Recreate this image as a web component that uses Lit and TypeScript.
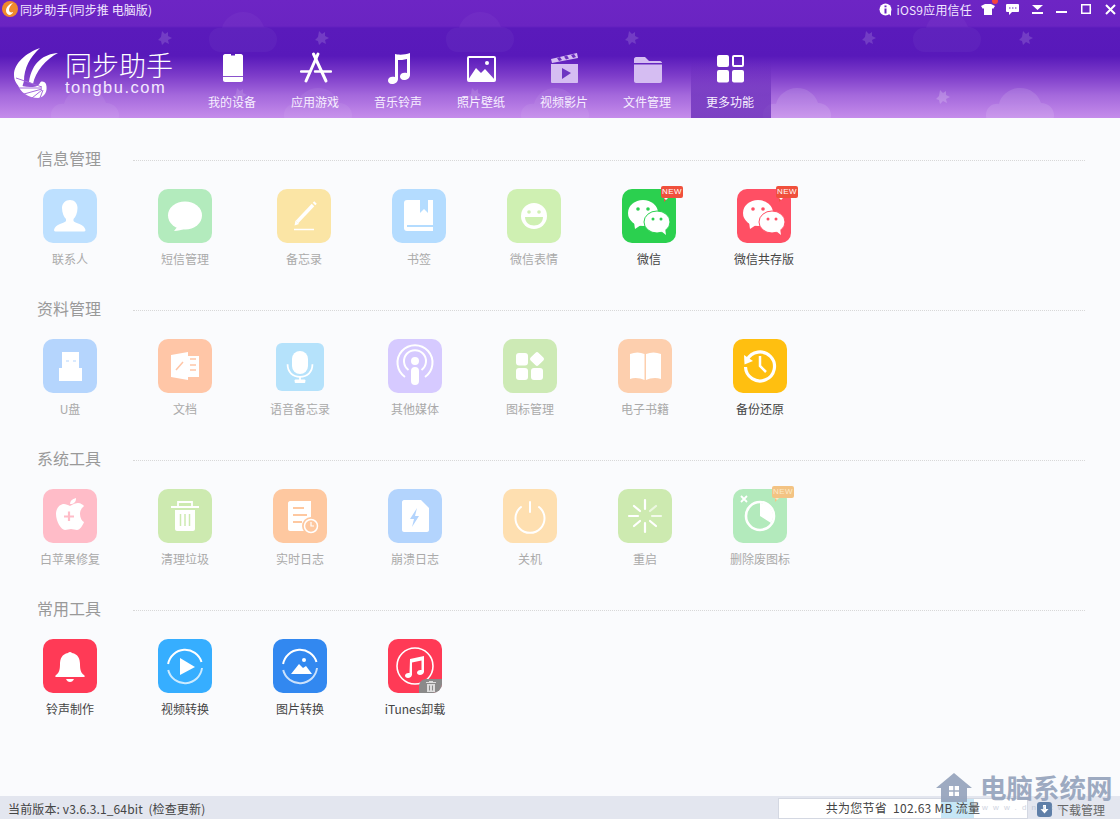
import { LitElement, html, css, svg, nothing } from "lit";
import { customElement } from "lit/decorators.js";

const W = "#fff";
const T = "var(--t)";

// tile glyphs, all on a 54x54 box
const glyphs: Record<string, unknown> = {
  contact: svg`<path fill="${W}" d="M27 11c4.500 0 7.500 3.500 7.500 8 0 5-2 9-4 11v2c1 2 11 3 12 9 0 1-1 1.500-2 1.500H13c-1 0-2-.5-2-1.500 1-6 11-7 12-9v-2c-2-2-4-6-4-11 0-4.500 3.500-8 8-8z"/>`,
  sms: svg`<ellipse fill="${W}" cx="27" cy="26.500" rx="17" ry="14"/><path fill="${W}" d="M20 37l-4 5c4 0 8-1 11-2.500z"/>`,
  note: svg`<path stroke="${W}" stroke-width="3.500" d="M20 33L36 16"/><path stroke="${W}" stroke-width="3.500" d="M37 15l1.500-1.500"/><path fill="${W}" d="M17.500 36.500l1-5 3.500 3.500z"/><path stroke="${W}" stroke-width="1.600" d="M17 40.500h20"/>`,
  book: svg`<path fill="${W}" d="M15 11h26v31H15c-2 0-3-1-3-3V14c0-2 1-3 3-3z"/><path fill="${T}" d="M28 11h8v13l-4-4-4 4z"/><path stroke="${T}" stroke-width="2" d="M15 37h26"/>`,
  smile: svg`<circle fill="${W}" cx="27" cy="27" r="13"/><circle fill="${T}" cx="22" cy="23" r="1.800"/><circle fill="${T}" cx="32" cy="23" r="1.800"/><path fill="${T}" d="M18 28h18c0 5-4 8.500-9 8.500S18 33 18 28z"/>`,
  wechat: svg`<ellipse fill="${W}" cx="21" cy="24" rx="15" ry="13"/><path fill="${W}" d="M12 33l1 7 6-4z"/><circle fill="${T}" cx="16" cy="20" r="1.800"/><circle fill="${T}" cx="26" cy="20" r="1.800"/><ellipse fill="${W}" stroke="${T}" stroke-width="1" cx="35" cy="33" rx="13" ry="11"/><path fill="${W}" d="M39 42l5 4-1-7z"/><circle fill="${T}" cx="31" cy="30" r="1.500"/><circle fill="${T}" cx="39" cy="30" r="1.500"/>`,
  usb: svg`<path fill="${W}" d="M19 13h17v16H19z"/><path fill="${W}" d="M16 29h23v13H16z"/><path stroke="${T}" stroke-width="1.200" d="M23 22h3M30 22h3"/>`,
  doc: svg`<path fill="${W}" d="M13 16l17-3v28l-17-3z"/><path fill="${W}" d="M30 17h11v21H30z"/><path stroke="${T}" stroke-width="1.500" d="M18 31l7-8M32 20h6M32 26h6M32 31h6"/>`,
  mic: svg`<rect fill="${W}" x="18" y="9" width="18" height="26" rx="9"/><path fill="none" stroke="${W}" stroke-width="2" d="M13 24c0 9 6 14 14 14s14-5 14-14"/><path stroke="${W}" stroke-width="2" d="M27 38v5"/><rect fill="${W}" x="21" y="41" width="12" height="4" rx="1"/>`,
  podcast: svg`<g fill="none" stroke="${W}" stroke-width="2"><path d="M17 38a17.500 17.500 0 1 1 20 0"/><path d="M20.500 31a11 11 0 1 1 13 0"/></g><circle fill="${W}" cx="27" cy="22" r="4"/><rect fill="${W}" x="23" y="28" width="8" height="18" rx="4"/>`,
  apps: svg`<g fill="${W}"><rect x="13" y="14" width="12" height="12.500" rx="3"/><rect x="28.500" y="14.500" width="11" height="11" rx="2" transform="rotate(45 34 20)"/><rect x="13" y="29" width="12" height="12" rx="3"/><rect x="28" y="29" width="12" height="12" rx="3"/></g>`,
  ebook: svg`<path fill="${W}" d="M12 15c5-2 10-2 14.500 0v26c-4-2-10-3-14.500-1z"/><path fill="${W}" d="M43 15c-5-2-10-2-15 0v26c4-2 10-3 15-1z"/>`,
  backup: svg`<path fill="none" stroke="${W}" stroke-width="3.200" d="M14 21a14.500 14.500 0 1 1-1.500 7"/><path fill="${W}" d="M11 16l9 6-8.500 3.500z"/><path fill="none" stroke="${W}" stroke-width="2.500" d="M27 17v10l6 6"/>`,
  apple: svg`<path fill="${W}" d="M27 17c3-2 6-3 8-3 3 0 5 2 6 3-2 2-4 4-4 8 0 4 2 7 4 8-1 3-4 8-7 8-2 0-4-1-6-1s-4 1-6 1c-4 0-9-9-9-16 0-6 4-10 8-10 2 0 4 1 6 2z"/><path fill="${W}" d="M27 15c0-3 2-5 6-6 0 4-2 6-6 6z"/><path stroke="${T}" stroke-width="2.200" d="M26 22.500v9.500M21 27.500h10"/>`,
  trash: svg`<path fill="none" stroke="${W}" stroke-width="1.800" d="M20 18v-5h14v5"/><path stroke="${W}" stroke-width="2" d="M13 18h28"/><path fill="${W}" d="M17 21h20v19c0 1-1 2-2 2H19c-1 0-2-1-2-2z"/><path stroke="${T}" stroke-width="1.500" d="M22.500 25v12M27 25v12M31.500 25v12"/>`,
  log: svg`<path fill="${W}" d="M17 12h21v30H17c-1 0-2-1-2-2V14c0-1 1-2 2-2z"/><path stroke="${T}" stroke-width="1.800" d="M20 19h11M20 26h14M20 33h9"/><circle fill="${T}" cx="38" cy="37" r="9"/><circle fill="none" stroke="${W}" stroke-width="1.500" cx="38" cy="37" r="6.500"/><path fill="none" stroke="${W}" stroke-width="1.200" d="M38 33v4h3"/>`,
  crash: svg`<path fill="${W}" d="M16 11h17l8 8v22c0 1-1 2-2 2H16c-1 0-2-1-2-2V13c0-1 1-2 2-2z"/><path fill="${T}" d="M29 19l-7 11h4l-2 8 7-11h-4z"/>`,
  power: svg`<g fill="none" stroke="${W}" stroke-width="2" stroke-linecap="round"><path d="M18 18a14.500 14.500 0 1 0 18 0"/><path d="M27 13v10"/></g>`,
  restart: svg`<g fill="none" stroke="${W}" stroke-width="2.200" stroke-linecap="round"><path d="M27 11v9"/><path d="M27 34v9"/><path d="M11 27h9"/><path opacity=".75" d="M34 27h9"/><path d="M16 17l6 5"/><path opacity=".6" d="M38 17l-6 5"/><path d="M16 37l6-5"/><path d="M38 37l-6-5"/></g>`,
  clean: svg`<path stroke="${W}" stroke-width="1.800" d="M8 7l6 6M14 7l-6 6"/><circle fill="none" stroke="${W}" stroke-width="2.600" cx="27" cy="27" r="14"/><path fill="${W}" d="M27 14a13 13 0 0 1 11 20l-11-7z"/>`,
  bell: svg`<path fill="${W}" d="M27 13a2.500 2.500 0 0 1 2 1c6 1 8 6 8 11 0 6 1 9 4 11 1 1 1 2 0 2H13c-1 0-1-1 0-2 3-2 4-5 4-11 0-5 2-10 8-11a2.500 2.500 0 0 1 2-1z"/><path fill="${W}" d="M23 40h8c-1 2-2 3-4 3s-3-1-4-3z"/>`,
  video: svg`<g fill="none" stroke="${W}" stroke-width="2"><path d="M10.100 25A17.200 17.200 0 0 1 43.500 23"/><path opacity=".75" d="M44 29A17.200 17.200 0 0 1 10.200 31"/></g><path fill="${W}" d="M22 19l15 9-15 8z"/>`,
  photo: svg`<g fill="none" stroke="${W}" stroke-width="2"><path d="M10.100 25A17.200 17.200 0 0 1 43.500 23"/><path opacity=".75" d="M44 29A17.200 17.200 0 0 1 10.200 31"/></g><path fill="${W}" d="M18 35l8-10 4 4 3-2 6 8z"/><circle fill="${W}" cx="31" cy="21" r="2"/>`,
  itunes: svg`<circle fill="none" stroke="${W}" stroke-width="1.600" cx="27" cy="27" r="18"/><path fill="${W}" d="M22 20l14-3v15.500c0 2-2 3.500-4 3.500s-3-1-3-2.500 2-3 4.500-2.500V21.500l-9.500 2v12c0 2-2 3.500-4 3.500s-3-1-3-2.500 2-3 4.500-2.500z"/>`,
};

type Item = {
  label: string;
  icon: string;
  color: string;
  on?: boolean;
  nudge?: boolean;
  small?: boolean;
  badge?: "new" | "faded";
  bin?: boolean;
};

const sections: { title: string; items: Item[] }[] = [
  {
    title: "信息管理",
    items: [
      { label: "联系人", icon: "contact", color: "#bde0ff" },
      { label: "短信管理", icon: "sms", color: "#b3ebbd" },
      { label: "备忘录", icon: "note", color: "#fbe5a5", nudge: true },
      { label: "书签", icon: "book", color: "#b4dcff" },
      { label: "微信表情", icon: "smile", color: "#cff0b2" },
      { label: "微信", icon: "wechat", color: "#2bd04f", on: true, badge: "new" },
      { label: "微信共存版", icon: "wechat", color: "#ff4f64", on: true, badge: "new" },
    ],
  },
  {
    title: "资料管理",
    items: [
      { label: "U盘", icon: "usb", color: "#b5d5fd" },
      { label: "文档", icon: "doc", color: "#ffc6a7" },
      { label: "语音备忘录", icon: "mic", color: "#b5e2fb", small: true },
      { label: "其他媒体", icon: "podcast", color: "#d6caff" },
      { label: "图标管理", icon: "apps", color: "#cdeab5" },
      { label: "电子书籍", icon: "ebook", color: "#fdcfae" },
      { label: "备份还原", icon: "backup", color: "#ffbf10", on: true },
    ],
  },
  {
    title: "系统工具",
    items: [
      { label: "白苹果修复", icon: "apple", color: "#ffbcc8" },
      { label: "清理垃圾", icon: "trash", color: "#cdeab0" },
      { label: "实时日志", icon: "log", color: "#fec8a0" },
      { label: "崩溃日志", icon: "crash", color: "#b3d4fd" },
      { label: "关机", icon: "power", color: "#fedfb0" },
      { label: "重启", icon: "restart", color: "#cdeab0" },
      { label: "删除废图标", icon: "clean", color: "#b3eabc", badge: "faded" },
    ],
  },
  {
    title: "常用工具",
    items: [
      { label: "铃声制作", icon: "bell", color: "#ff3a56", on: true },
      { label: "视频转换", icon: "video", color: "#36aeff", on: true },
      { label: "图片转换", icon: "photo", color: "#3288f0", on: true },
      { label: "iTunes卸载", icon: "itunes", color: "#ff3a56", on: true, bin: true },
    ],
  },
];

// top nav icons on a 32x32 box
const PALE = "#d5bdf2";
const nav: { label: string; icon: unknown; active?: boolean }[] = [
  {
    label: "我的设备",
    icon: svg`<path fill="${W}" d="M8 2h6v1.500h4V2h6c1 0 2 1 2 2v24c0 1-1 2-2 2H8c-1 0-2-1-2-2V4c0-1 1-2 2-2z"/><path stroke="#8a52cc" stroke-width="1" d="M6 24.500h20"/>`,
  },
  {
    label: "应用游戏",
    icon: svg`<g fill="none" stroke="${W}" stroke-linecap="round"><path stroke-width="2.400" d="M1 19.500h9M15 19.500h16"/><path stroke-width="3" d="M18 2L6 29"/><path stroke-width="3" d="M13.500 2L26 29"/></g>`,
  },
  {
    label: "音乐铃声",
    icon: svg`<path fill="${W}" d="M12 2c3 1 10 1 15-1v22c0 3-3 5-6 5s-4-2-4-3.500c0-3 3-4.500 7-3.500V7c-3 1-7 1-9 1v19c0 3-3 5-6 5s-4-2-4-3.500c0-3 3-4.500 7-3.500z"/>`,
  },
  {
    label: "照片壁纸",
    icon: svg`<rect fill="none" stroke="${W}" stroke-width="2" x="2" y="5" width="27" height="24" rx="1"/><path fill="${W}" d="M2 28l8-12 5 5 4-4 10 11v1H2z"/><circle fill="${W}" cx="21" cy="11" r="2"/>`,
  },
  {
    label: "视频影片",
    icon: svg`<path fill="${PALE}" d="M2 12h27v18c0 1-1 1-1 1H3c-1 0-1-1-1-1z"/><path fill="${PALE}" d="M2 7l26-6 1 5L3 11z" /><path fill="#6a2cc0" d="M8 6l3-1 2 3-3 1zM15 4.500l3-1 2 3-3 1zM22 3l3-1 2 3-3 1z"/><path fill="#6d35c2" d="M13 16l9 5-9 6z"/>`,
  },
  {
    label: "文件管理",
    icon: svg`<path fill="${PALE}" d="M2 7c0-1 1-2 2-2h9l4 4h11c1 0 2 1 2 2H2z"/><path fill="${PALE}" d="M2 12.500h28V29c0 1-1 2-2 2H4c-1 0-2-1-2-2z"/>`,
  },
  {
    label: "更多功能",
    active: true,
    icon: svg`<g fill="${W}"><rect x="2" y="3" width="12" height="12" rx="2"/><rect x="2" y="18" width="12" height="12.500" rx="2"/><rect x="17" y="18" width="12" height="12.500" rx="2"/></g><rect fill="none" stroke="${W}" stroke-width="2" x="18" y="4" width="10" height="10" rx="1"/>`,
  },
];

// decoration scattered over the header gradient
const stars: [number, number, number][] = [
  [165, 38, 0.15], [322, 38, 0.15], [632, 38, 0.15], [869, 38, 0.15], [1026, 38, 0.15],
  [943, 97, 0.2], [475, 95, 0.12], [240, 95, 0.12],
];
const clouds: [number, number, number][] = [
  [243, 32, 0.03], [480, 32, 0.03], [947, 32, 0.03],
  [85, 108, 0.06], [318, 108, 0.06], [555, 108, 0.06], [797, 108, 0.11], [1020, 108, 0.11],
];

@customElement("app-root")
export class AppRoot extends LitElement {
  static styles = css`
    :host {
      display: flex;
      flex-direction: column;
      height: 100vh;
      overflow: hidden;
      position: relative;
      font-family: "Noto Sans CJK SC", "Liberation Sans", sans-serif;
      font-size: 12px;
      background: #fafbfd;
    }
    .header {
      position: relative;
      height: 118px;
      flex: none;
      overflow: hidden;
      color: #fff;
      background: linear-gradient(
        180deg,
        #6d25c4 0,
        #6a24c2 26px,
        #5a1abb 28px,
        #5819ba 56px,
        #7e3dca 76px,
        #a468dc 95px,
        #c58ceb 118px
      );
    }
    .deco {
      position: absolute;
      pointer-events: none;
    }
    .titlebar {
      position: relative;
      height: 26px;
      display: flex;
      align-items: center;
      padding: 0 0 8px 2px;
      box-sizing: border-box;
      color: #f1e6ff;
    }
    .title {
      margin-left: 2px;
      letter-spacing: 0.1px;
    }
    .titlebar .grow {
      flex: 1;
    }
    .trust {
      display: flex;
      align-items: center;
      gap: 4px;
      margin-right: 4px;
      letter-spacing: 0.2px;
    }
    .winbtn {
      width: 24.500px;
      height: 18px;
      display: flex;
      align-items: center;
      justify-content: center;
      position: relative;
    }
    .winbtn:last-child {
      margin-right: -3px;
    }
    .min-glyph {
      margin-top: 6px;
    }
    .dot {
      position: absolute;
      top: -2px;
      right: 3px;
      width: 6px;
      height: 6px;
      border-radius: 50%;
      background: #f4443e;
    }
    .bar {
      position: relative;
      display: flex;
      height: 92px;
    }
    .logo {
      width: 190.500px;
      flex: none;
      display: flex;
      align-items: flex-start;
      padding: 22px 0 0 14px;
      box-sizing: border-box;
      gap: 7px;
    }
    .logo-text {
      display: flex;
      flex-direction: column;
      line-height: 1;
    }
    .logo-cn {
      font-size: 27px;
      font-weight: 300;
      margin-top: 4px;
      line-height: 25px;
    }
    .logo-en {
      font-size: 16.500px;
      letter-spacing: 1.500px;
      font-family: "Liberation Sans", sans-serif;
      line-height: 20px;
      color: #f3e8ff;
    }
    .nav {
      position: relative;
      width: 83px;
      display: flex;
      flex-direction: column;
      align-items: center;
      padding-top: 26px;
      box-sizing: border-box;
      color: #f7efff;
    }
    .nav.active::before {
      content: "";
      position: absolute;
      inset: 34px 0.500px 0 2.500px;
      background: linear-gradient(180deg, rgba(96, 36, 180, 0), rgba(96, 36, 180, 0.6) 60%, rgba(96, 36, 180, 0.72));
    }
    .nav svg,
    .nav span {
      position: relative;
    }
    .nav svg {
      display: block;
      margin-left: 2px;
    }
    .nav span {
      margin-top: 9px;
      line-height: 18px;
    }
    .main {
      flex: 1;
      min-height: 0;
      padding-top: 29px;
    }
    .section {
      height: 150px;
    }
    .heading {
      display: flex;
      align-items: center;
      gap: 32px;
      height: 22px;
      margin: 0 35px 0 37px;
      color: #999;
      font-size: 16px;
    }
    .heading i {
      flex: 1;
      border-top: 1px dotted #d8d8d8;
      margin-top: 4px;
    }
    .row {
      display: flex;
      padding: 20px 0 0 12.500px;
    }
    .cell {
      width: 115px;
      display: flex;
      flex-direction: column;
      align-items: center;
      color: #aaa;
    }
    .cell.nudge {
      margin-left: 4px;
    }
    .cell.on {
      color: #444;
    }
    .slot {
      position: relative;
      width: 54px;
      height: 54px;
      display: flex;
      align-items: center;
      justify-content: center;
    }
    .tile {
      width: 54px;
      height: 54px;
      border-radius: 10px;
      overflow: hidden;
    }
    .tile svg {
      display: block;
      width: 100%;
      height: 100%;
    }
    .small .tile {
      width: 48px;
      height: 48px;
      border-radius: 6px;
      margin-top: 1px;
    }
    .label {
      margin-top: 7px;
      line-height: 18px;
      white-space: nowrap;
    }
    .badge {
      position: absolute;
      left: 39px;
      top: -3px;
      width: 22px;
      height: 11.500px;
      border-radius: 2px;
      background: #f0503c;
      color: #fff;
      font: 400 8px/11.500px "Liberation Sans", sans-serif;
      letter-spacing: 0.5px;
      text-align: center;
    }
    .badge::after {
      content: "";
      position: absolute;
      left: 3px;
      top: 100%;
      border: 2px solid transparent;
      border-top-color: inherit;
      border-left-color: #f0503c;
    }
    .badge.faded {
      background: #f3c383;
      color: #fbe9c8;
    }
    .badge.faded::after {
      border-left-color: #f3c383;
    }
    .bin {
      position: absolute;
      left: 31px;
      top: 40px;
      width: 23px;
      height: 14px;
      border-radius: 7px 0 9px 0;
      background: #8a8a8a;
      display: flex;
      align-items: center;
      justify-content: center;
    }
    .status {
      position: relative;
      flex: none;
      height: 23px;
      display: flex;
      align-items: stretch;
      background: #e3e6ef;
      color: #444;
    }
    .version {
      flex: 1;
      padding-left: 8px;
      line-height: 26px;
      white-space: pre;
      letter-spacing: 0.13px;
    }
    .saved {
      width: 250px;
      margin-top: 2px;
      box-sizing: border-box;
      border: 1px solid #d4d8e2;
      background: linear-gradient(90deg, #fff 162px, #c6e6f6 162px, #c6e6f6 195px, #fff 195px);
      text-align: center;
      line-height: 18px;
      white-space: pre;
      letter-spacing: 0.3px;
    }
    .dl {
      width: 92px;
      box-sizing: border-box;
      padding-left: 9px;
      display: flex;
      align-items: center;
      gap: 5px;
      padding-top: 3px;
      color: #666;
    }
    .mark {
      position: absolute;
      left: 936px;
      top: 772px;
      display: flex;
      color: #94a2bb;
      opacity: 0.9;
      pointer-events: none;
    }
    .mark b {
      font-size: 26.500px;
      font-weight: 700;
      line-height: 30px;
      margin-left: 8px;
    }
    .mark small {
      position: absolute;
      left: 46px;
      top: 31px;
      font-size: 8px;
      letter-spacing: 5.200px;
      white-space: nowrap;
      opacity: 0.5;
      font-family: "Liberation Sans", sans-serif;
    }
  `;

  private renderItem(it: Item) {
    return html`
      <div class="cell ${it.on ? "on" : ""} ${it.nudge ? "nudge" : ""} ${it.small ? "small" : ""}">
        <div class="slot">
          <div class="tile" style="background:${it.color};--t:${it.color}">
            <svg viewBox="0 0 54 54">${glyphs[it.icon]}</svg>
          </div>
          ${it.badge ? html`<div class="badge ${it.badge === "faded" ? "faded" : ""}">NEW</div>` : nothing}
          ${it.bin
            ? html`<div class="bin">
                <svg width="10" height="11" viewBox="0 0 10 11">
                  <path fill="#ddd" d="M3 0h4v1h3v1H0V1h3zM1 3h8v8H1z" />
                  <path stroke="#8a8a8a" d="M3.500 4.500v5M6.500 4.500v5" />
                </svg>
              </div>`
            : nothing}
        </div>
        <div class="label">${it.label}</div>
      </div>
    `;
  }

  render() {
    return html`
      <div class="header">
        ${clouds.map(
          ([x, y, o]) => html`<svg class="deco" style="left:${x - 34}px;top:${y - 20}px;opacity:${o}" width="68" height="40" viewBox="0 0 68 40">
            <path fill="#fff" d="M12 40C4 40 0 34 0 27c0-7 6-12 13-11 2-9 11-16 21-16s18 6 21 15c7 0 13 5 13 12s-5 13-12 13z" />
          </svg>`
        )}
        ${stars.map(
          ([x, y, o]) => html`<svg class="deco" style="left:${x - 7}px;top:${y - 7}px;opacity:${o}" width="14" height="14" viewBox="0 0 14 14">
            <path fill="#fff" d="M4 0l3 3 3-2 0 4 4 2-4 2 1 4-4-2-3 3-1-4-3-1 3-3z" />
          </svg>`
        )}
        <div class="titlebar">
          <svg width="16" height="16" viewBox="0 0 16 16">
            <circle cx="8" cy="8" r="8" fill="#f08a2c" />
            <path fill="#fff" d="M11 2C7 3 4 6 4 10c0 2 2 4 4 4 2-1 3-2 3-3-2 1-4 0-4-2 0-3 2-5 4-7z" />
          </svg>
          <span class="title">同步助手(同步推 电脑版)</span>
          <span class="grow"></span>
          <div class="trust">
            <svg width="13" height="13" viewBox="0 0 13 13">
              <circle cx="6.500" cy="6.500" r="6" fill="#fff" />
              <path fill="#fff" d="M9 10l3 3V8z" />
              <path stroke="#6a24c2" stroke-width="2" d="M6.500 5.500v5M6.500 2.500v1.800" />
            </svg>
            <span>iOS9应用信任</span>
          </div>
          <div class="winbtn">
            <svg width="14" height="11" viewBox="0 0 14 11"><path fill="#fff" d="M0 2l4-2h6l4 2-2 3-1-1v7H3V4L2 5z" /></svg>
            <i class="dot"></i>
          </div>
          <div class="winbtn">
            <svg width="13" height="11" viewBox="0 0 13 11">
              <path fill="#fff" d="M1 0h11c1 0 1 1 1 1v6c0 1-1 1-1 1H6l-3 3V8H1C0 8 0 7 0 7V1c0-1 1-1 1-1z" />
              <path stroke="#6a24c2" stroke-dasharray="1.500 1.500" d="M3 4h8" />
            </svg>
          </div>
          <div class="winbtn">
            <svg width="11" height="9" viewBox="0 0 11 9"><path fill="#fff" d="M0 0h11L5.500 5zM0 7h11v2H0z" /></svg>
          </div>
          <div class="winbtn">
            <svg class="min-glyph" width="11" height="3" viewBox="0 0 11 3"><path fill="#fff" d="M0 0h11v2H0z" /></svg>
          </div>
          <div class="winbtn">
            <svg width="10" height="10" viewBox="0 0 10 10"><rect fill="none" stroke="#fff" stroke-width="1.500" x=".75" y=".75" width="8.500" height="8.500" /></svg>
          </div>
          <div class="winbtn">
            <svg width="11" height="11" viewBox="0 0 11 11"><path stroke="#fff" stroke-width="2" d="M1 1l9 9M10 1l-9 9" /></svg>
          </div>
        </div>
        <div class="bar">
          <div class="logo">
            <svg width="44" height="50" viewBox="0 0 44 50">
              <path fill="#fff" d="M26 0C12 5 0 15 0 27c0 6 3 10 8 14 0-1 1-5 2-8C10 20 16 9 26 0z" />
              <path fill="#fff" d="M44 5C30 6 18 14 15 34l4 2C21 24 32 11 44 5z" />
              <path fill="#fff" d="M4 36c1 8 11 14 20 14 7-1 10-7 8-14-2-3-5-3-6-1-2 4-6 4-10 4-5 0-9-1-12-3z" />
              <g stroke="#a468dc" stroke-width="1" fill="none">
                <path d="M28 39L2 30" />
                <path d="M28 40L5 40" />
                <path d="M28 41L10 46" />
                <path d="M28 42L18 50" />
                <path d="M29 42l-3 8" />
              </g>
            </svg>
            <div class="logo-text">
              <span class="logo-cn">同步助手</span>
              <span class="logo-en">tongbu.com</span>
            </div>
          </div>
          ${nav.map(
            (n) => html`<div class="nav ${n.active ? "active" : ""}">
              <svg width="32" height="32" viewBox="0 0 32 32">${n.icon}</svg>
              <span>${n.label}</span>
            </div>`
          )}
        </div>
      </div>
      <div class="main">
        ${sections.map(
          (s) => html`<div class="section">
            <div class="heading"><span>${s.title}</span><i></i></div>
            <div class="row">${s.items.map((it) => this.renderItem(it))}</div>
          </div>`
        )}
      </div>
      <div class="status">
        <div class="version">当前版本: v3.6.3.1_64bit  (检查更新)</div>
        <div class="saved">共为您节省  102.63 MB 流量</div>
        <div class="dl">
          <svg width="15" height="15" viewBox="0 0 15 15">
            <rect width="15" height="15" rx="3" fill="#5f7fa8" />
            <path fill="#fff" d="M6 3h3v4h2.500l-4 4.500-4-4.500H6z" />
          </svg>
          <span>下载管理</span>
        </div>
      </div>
      <div class="mark">
        <svg width="36" height="30" viewBox="0 0 36 30">
          <path fill="currentColor" d="M18 1L0 16h5v14h26V16h5z" />
          <path fill="#fff" d="M13 14h10v10H13z" />
          <path fill="currentColor" d="M17.300 14h1.400v10h-1.400zM13 18.300h10v1.400H13z" />
        </svg>
        <b>电脑系统网</b>
        <small>www.dnxtw.com</small>
      </div>
    `;
  }
}
